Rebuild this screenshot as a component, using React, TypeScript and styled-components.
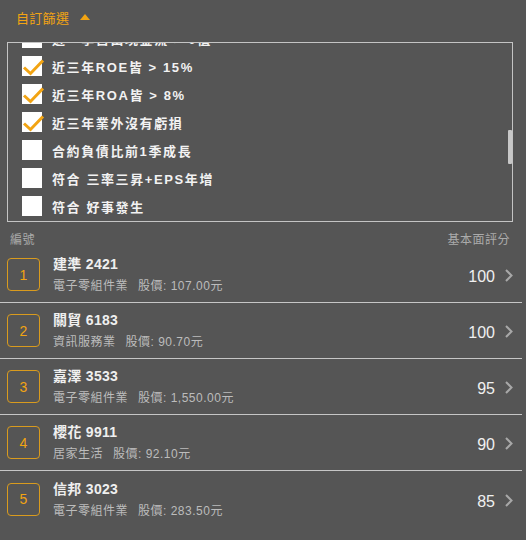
import React, { useEffect, useRef } from "react";
import styled, { createGlobalStyle } from "styled-components";

const FONT = `"Liberation Sans", "Noto Sans CJK TC", sans-serif`;
const ORANGE = "#f2a413";

const Global = createGlobalStyle`
  html, body { margin: 0; padding: 0; background: #555555; }
  body { font-family: ${FONT}; width: 526px; min-height: 540px; overflow: hidden; }
`;

const Page = styled.div`
  width: 526px;
  height: 540px;
  background: #555555;
  display: flex;
  flex-direction: column;
`;

const FilterHeader = styled.div`
  height: 35px;
  display: flex;
  align-items: center;
  gap: 11px;
  padding-left: 16px;
  color: ${ORANGE};
  font-size: 13px;
  letter-spacing: 0.3px;
`;

const Triangle = styled.span`
  width: 0;
  height: 0;
  border-left: 5.5px solid transparent;
  border-right: 5.5px solid transparent;
  border-bottom: 6px solid ${ORANGE};
  margin-top: -2px;
`;

const FilterBox = styled.div`
  position: relative;
  margin: 7px 13px 0 7px;
  border: 1px solid #c4c4c4;
  height: 178px;
`;

const FilterScroll = styled.div`
  height: 178px;
  overflow-y: scroll;
  scrollbar-width: none;
  &::-webkit-scrollbar { display: none; }
`;

const ScrollThumb = styled.div`
  position: absolute;
  right: 0;
  width: 4px;
  background: #c8c8c8;
  border-radius: 1px;
`;

const FilterRow = styled.label`
  height: 28px;
  display: flex;
  align-items: center;
  padding-left: 14px;
  gap: 10px;
  color: #f2f2f2;
  font-size: 13px;
  font-weight: bold;
  letter-spacing: 1.6px;
  white-space: nowrap;
`;

const Box = styled.span`
  width: 20px;
  height: 20px;
  background: #ffffff;
  position: relative;
  flex: none;
`;

const Check = styled.svg`
  position: absolute;
  left: 1px;
  top: 1px;
  overflow: visible;
`;

const ColumnHeader = styled.div`
  height: 25px;
  display: flex;
  align-items: center;
  justify-content: space-between;
  padding: 7px 16px 0 10px;
  box-sizing: border-box;
  color: #ababab;
  font-size: 12px;
  letter-spacing: 0.5px;
`;

const List = styled.div`
  display: flex;
  flex-direction: column;
  width: 522px;
`;

const Row = styled.div<{ $last?: boolean }>`
  height: 56px;
  box-sizing: border-box;
  border-bottom: ${(p) => (p.$last ? "none" : "1.5px solid #c6c6c6")};
  display: flex;
  align-items: center;
  padding: 0 9px 0 7px;
`;

const Rank = styled.div`
  width: 33px;
  height: 33px;
  box-sizing: border-box;
  border: 1.5px solid #d99b1e;
  border-radius: 4px;
  display: flex;
  align-items: center;
  justify-content: center;
  color: ${ORANGE};
  font-size: 14px;
  flex: none;
`;

const Info = styled.div`
  flex: 1;
  display: flex;
  flex-direction: column;
  gap: 3px;
  margin-left: 13px;
  margin-top: -3px;
`;

const Title = styled.div`
  color: #efefef;
  font-size: 14px;
  font-weight: bold;
  letter-spacing: 0.3px;
`;

const Sub = styled.div`
  color: #bcbcbc;
  font-size: 12px;
  letter-spacing: 0.5px;
  display: flex;
  gap: 10px;
`;

const Score = styled.div`
  color: #f0f0f0;
  font-size: 16px;
  margin-right: 10px;
  margin-top: 5px;
`;

const Chevron = styled.svg`
  flex: none;
  margin-top: 2px;
`;

const filters: { label: string; checked: boolean }[] = [
  { label: "近一年EPS > 0", checked: false },
  { label: "近四季EPS > 2元", checked: false },
  { label: "本益比 < 15", checked: false },
  { label: "本益比 < 20", checked: false },
  { label: "股價淨值比 < 1.5", checked: false },
  { label: "現金殖利率 > 5%", checked: false },
  { label: "現金殖利率 > 3%", checked: false },
  { label: "連續五年配息", checked: false },
  { label: "近三年毛利率皆 > 30%", checked: false },
  { label: "近三年營益率皆 > 10%", checked: false },
  { label: "近三年淨利率皆 > 5%", checked: false },
  { label: "月營收年增 > 20%", checked: false },
  { label: "月營收創新高", checked: false },
  { label: "負債比 < 40%", checked: false },
  { label: "流動比率 > 150%", checked: false },
  { label: "速動比率 > 100%", checked: false },
  { label: "近一季自由現金流 > 0值", checked: false },
  { label: "近三年ROE皆 > 15%", checked: true },
  { label: "近三年ROA皆 > 8%", checked: true },
  { label: "近三年業外沒有虧損", checked: true },
  { label: "合約負債比前1季成長", checked: false },
  { label: "符合 三率三昇+EPS年增", checked: false },
  { label: "符合 好事發生", checked: false },
  { label: "董監持股 > 20%", checked: false },
  { label: "外資連續買超", checked: false },
  { label: "投信連續買超", checked: false },
  { label: "融資減少", checked: false },
  { label: "股價站上月線", checked: false },
  { label: "股價站上季線", checked: false },
  { label: "均線多頭排列", checked: false },
  { label: "KD黃金交叉", checked: false },
  { label: "MACD翻紅", checked: false },
  { label: "成交量 > 1000張", checked: false },
  { label: "創52週新高", checked: false },
];

const stocks = [
  { name: "建準 2421", industry: "電子零組件業", price: "107.00元", score: 100 },
  { name: "關貿 6183", industry: "資訊服務業", price: "90.70元", score: 100 },
  { name: "嘉澤 3533", industry: "電子零組件業", price: "1,550.00元", score: 95 },
  { name: "櫻花 9911", industry: "居家生活", price: "92.10元", score: 90 },
  { name: "信邦 3023", industry: "電子零組件業", price: "283.50元", score: 85 },
];

const ROW_H = 28;
const VIEW_H = 178;
const SCROLL_TOP = 16 * ROW_H + 19;
const CONTENT_H = filters.length * ROW_H;

function CheckMark() {
  return (
    <Check width="20" height="20" viewBox="0 0 20 20">
      <path
        d="M1 10.5 L7.5 16.5 L20 3.5"
        fill="none"
        stroke={ORANGE}
        strokeWidth="3"
        strokeLinecap="butt"
        strokeLinejoin="miter"
      />
    </Check>
  );
}

export default function App() {
  const scrollRef = useRef<HTMLDivElement>(null);
  useEffect(() => {
    if (scrollRef.current) scrollRef.current.scrollTop = SCROLL_TOP;
  }, []);

  const thumbH = (VIEW_H * VIEW_H) / CONTENT_H;
  const thumbTop = (SCROLL_TOP / CONTENT_H) * VIEW_H;

  return (
    <Page>
      <Global />
      <FilterHeader>
        <span>自訂篩選</span>
        <Triangle />
      </FilterHeader>
      <FilterBox>
        <FilterScroll ref={scrollRef}>
          {filters.map((f) => (
            <FilterRow key={f.label}>
              <Box>{f.checked && <CheckMark />}</Box>
              <span>{f.label}</span>
            </FilterRow>
          ))}
        </FilterScroll>
        <ScrollThumb style={{ top: thumbTop, height: thumbH }} />
      </FilterBox>
      <ColumnHeader>
        <span>編號</span>
        <span>基本面評分</span>
      </ColumnHeader>
      <List>
        {stocks.map((s, i) => (
          <Row key={s.name} $last={i === stocks.length - 1}>
            <Rank>{i + 1}</Rank>
            <Info>
              <Title>{s.name}</Title>
              <Sub>
                <span>{s.industry}</span>
                <span>股價: {s.price}</span>
              </Sub>
            </Info>
            <Score>{s.score}</Score>
            <Chevron width="8" height="13" viewBox="0 0 8 13">
              <path d="M1 1 L6.5 6.5 L1 12" fill="none" stroke="#a8a8a8" strokeWidth="2" />
            </Chevron>
          </Row>
        ))}
      </List>
    </Page>
  );
}
